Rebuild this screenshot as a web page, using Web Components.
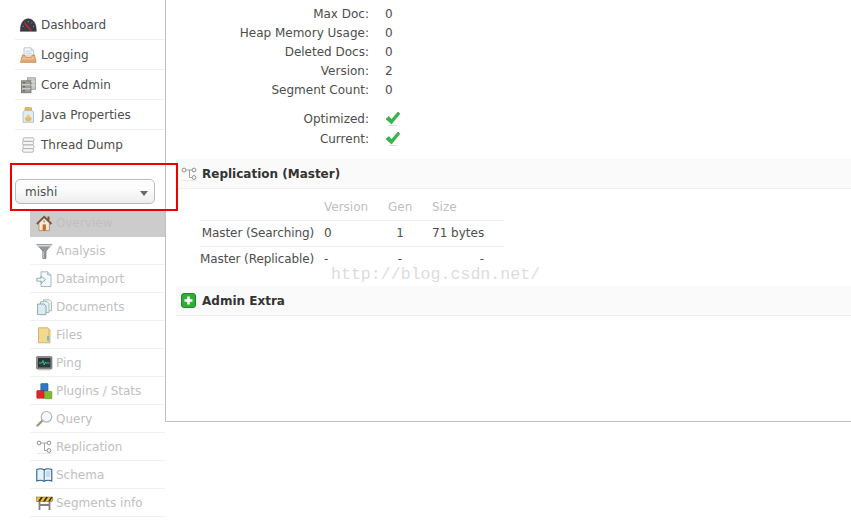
<!DOCTYPE html>
<html lang="en"><head><meta charset="utf-8"><title>Solr Admin</title>
<style>
html,body{margin:0;padding:0;background:#fff;overflow:hidden;height:526px}
body{font-family:"DejaVu Sans",Verdana,sans-serif;font-size:12px;color:#4d4d4d}
</style></head><body>
<solr-app>
  <solr-nav slot="nav">
    <solr-item icon="dashboard">Dashboard</solr-item>
    <solr-item icon="logging">Logging</solr-item>
    <solr-item icon="core">Core Admin</solr-item>
    <solr-item icon="java">Java Properties</solr-item>
    <solr-item icon="thread" last>Thread Dump</solr-item>
    <solr-select>mishi</solr-select>
    <solr-submenu>
      <solr-item sub active icon="home">Overview</solr-item>
      <solr-item sub icon="funnel">Analysis</solr-item>
      <solr-item sub icon="import">Dataimport</solr-item>
      <solr-item sub icon="docs">Documents</solr-item>
      <solr-item sub icon="folder">Files</solr-item>
      <solr-item sub icon="ping">Ping</solr-item>
      <solr-item sub icon="plugins">Plugins / Stats</solr-item>
      <solr-item sub icon="query">Query</solr-item>
      <solr-item sub icon="replication">Replication</solr-item>
      <solr-item sub icon="schema">Schema</solr-item>
      <solr-item sub icon="segments">Segments info</solr-item>
    </solr-submenu>
  </solr-nav>
  <solr-main slot="main">
    <solr-stats>
      <solr-kv label="Max Doc:">0</solr-kv>
      <solr-kv label="Heap Memory Usage:">0</solr-kv>
      <solr-kv label="Deleted Docs:">0</solr-kv>
      <solr-kv label="Version:">2</solr-kv>
      <solr-kv label="Segment Count:">0</solr-kv>
    </solr-stats>
    <solr-flags>
      <solr-kv tall label="Optimized:"><solr-icon name="check"></solr-icon></solr-kv>
      <solr-kv tall label="Current:"><solr-icon name="check"></solr-icon></solr-kv>
    </solr-flags>
    <solr-section icon="replication" heading="Replication (Master)"><solr-repl></solr-repl></solr-section>
    <solr-section icon="plus" heading="Admin Extra"></solr-section>
  </solr-main>
</solr-app>
<script>
const ICONS={
dashboard:`<path d="M0.3 14.3 C0.3 5.5 3.8 1.8 8.3 1.8 C12.8 1.8 16.3 5.5 16.3 14.3 Z" fill="#3a3b44" stroke="#26262b" stroke-width=".5"/><path d="M2.6 9.5 3.6 9.1M4.8 5.6 5.4 6.4M8.3 4v1.2M11.8 5.6 11.2 6.4M14 9.5 13 9.1" stroke="#b8bcc8" stroke-width=".8"/><path d="M5.2 7 11.3 13.6" stroke="#e3242b" stroke-width="1.3"/>`,
logging:`<path d="M4 .8h7l2.7 2.7v8H4z" fill="#f6f8fa" stroke="#a9bcc9" stroke-width=".8"/><path d="M11 .8v2.7h2.7" fill="#dbe5ec" stroke="#a9bcc9" stroke-width=".6"/><path d="M5.5 4.2h5M5.5 6.2h6.5M5.5 8.2h6.5" stroke="#b3c4d0" stroke-width=".7"/><path d="M2.5 8h2l1 2.2h6l1-2.2h2L16 15.3H.6z" fill="#f0bd8c" stroke="#b57a45" stroke-width=".8"/><path d="M1 12.6h14.7v2.3H1z" fill="#e0a46c"/>`,
core:`<rect x="7.5" y=".8" width="8" height="11.5" fill="#c3ccc4" stroke="#8a8f88" stroke-width=".7"/><rect x="1.5" y="3.8" width="9.5" height="12" fill="#9a9e96" stroke="#666" stroke-width=".7"/><path d="M2 7.8h8.5M2 11.8h8.5M11 4.5h4.2M11 8.3h4.2" stroke="#dcdeda" stroke-width="1"/><path d="M3 5.8h2M3 9.8h2M3 13.8h2" stroke="#4e524c" stroke-width="1"/>`,
java:`<rect x="5" y=".6" width="6.5" height="2.6" rx=".6" fill="#e8c058" stroke="#b48f33" stroke-width=".6"/><path d="M4.3 3.6h8l1.2 2v9.7H3V5.6z" fill="#e1edf5" stroke="#a0b6c6" stroke-width=".8"/><ellipse cx="8.3" cy="12" rx="3.3" ry="2.4" fill="#e3bd63"/><circle cx="8.3" cy="9" r="1.6" fill="#eccb7e"/>`,
thread:`<g fill="#f6f6f6" stroke="#a6a6a6" stroke-width=".8"><rect x="3" y=".8" width="11" height="3.6" rx="1.4"/><rect x="2.5" y="4.4" width="11" height="3.6" rx="1.4"/><rect x="3" y="8" width="11" height="3.6" rx="1.4"/><rect x="2.5" y="11.6" width="11" height="3.6" rx="1.4"/></g>`,
home:`<path d="M.5 8.3 8.2.8l7.7 7.5-1.2 1.2L8.2 3.2 1.7 9.5z" fill="#7c4f38" stroke="#5f3a28" stroke-width=".4"/><rect x="11.5" y="1.5" width="2" height="3.5" fill="#7c4f38"/><path d="M3 8 8.2 3.2 13.4 8v7.6H3z" fill="#f7ead6" stroke="#a67a58" stroke-width=".7"/><rect x="6.6" y="9.4" width="3.3" height="6.2" fill="#c4702f"/><circle cx="8.2" cy="6.6" r="1" fill="#7ba2c4"/>`,
funnel:`<path d="M.8 1.5h15L10 8v7.5H6.8V8z" fill="#93979b" stroke="#75787b" stroke-width=".7"/><path d="M1.4 1.8h14v1.7h-14z" fill="#d2d5d7"/><path d="M7.6 8.5v6.5" stroke="#c5c8ca" stroke-width=".9"/>`,
import:`<path d="M5 .8h6.7L15 4v11.5H5z" fill="#f6fafc" stroke="#8eaab6" stroke-width=".8"/><path d="M11.7.8V4H15" fill="#d3e2e8" stroke="#8eaab6" stroke-width=".7"/><path d="M.8 7.2h4.4V5l4.3 3.7-4.3 3.7V10.2H.8z" fill="#f0f6f8" stroke="#7d9aa6" stroke-width=".8"/>`,
docs:`<path d="M7.5.8h6l2 2v9h-8z" fill="#f0f6f7" stroke="#8ba0a8" stroke-width=".7"/><path d="M4.5 2.6h6.5l2 2v9h-8.5z" fill="#e6f1f3" stroke="#8ba0a8" stroke-width=".7"/><path d="M1.5 5h6.5l2 2v8.7h-8.5z" fill="#dcebee" stroke="#7d959e" stroke-width=".8"/>`,
folder:`<path d="M2.5.8h9l2.5 2v13h-11.5z" fill="#f3d88f" stroke="#c9a458" stroke-width=".8"/><path d="M12.5 3v12" stroke="#e7c676" stroke-width="1"/><path d="M12 9v4.8" stroke="#58b7e0" stroke-width="1.6"/>`,
ping:`<rect x=".5" y="1.5" width="15.5" height="12.5" rx="1" fill="#8a8a8a" stroke="#666" stroke-width=".6"/><rect x="2" y="3" width="12.5" height="9.5" fill="#2b3a38"/><path d="M3 8h3l1-2.5 1.3 4.5 1-3 .7 1h3.5" fill="none" stroke="#3fd6a5" stroke-width=".8"/><path d="M2 14.8h12.5" stroke="#bbb" stroke-width="1"/>`,
plugins:`<rect x="4.8" y=".6" width="7.2" height="7.4" rx=".5" fill="#2b78cc" stroke="#1c5596" stroke-width=".6"/><rect x=".8" y="7.6" width="7.4" height="7.6" rx=".5" fill="#e32528" stroke="#a81518" stroke-width=".6"/><rect x="8.5" y="8.4" width="7.3" height="7.3" rx=".5" fill="#7dbd30" stroke="#578a1e" stroke-width=".6"/>`,
query:`<path d="M6.5 9.5 1.5 14.5" stroke="#a79377" stroke-width="2.3" stroke-linecap="round"/><circle cx="10.5" cy="5.8" r="5.3" fill="#f5f8fb" stroke="#aeb5ba" stroke-width="1.2"/>`,
replication:`<g fill="#fff" stroke="#909090" stroke-width="1"><circle cx="3" cy="4" r="1.9"/><circle cx="13" cy="4" r="1.9"/><circle cx="13" cy="11.5" r="1.9"/></g><path d="M5 4h3.5v7.5H11M8.5 4H11" fill="none" stroke="#a2a2a2" stroke-width="1"/><path d="M1 14.5h15" stroke="#e8e8e8" stroke-width="1"/>`,
schema:`<path d="M.8 2.5C3 1.5 6 1.5 8.2 2.8 10.4 1.5 13.4 1.5 15.8 2.5V14C13.4 13 10.4 13 8.2 14.3 6 13 3 13 .8 14Z" fill="#eaf2f8" stroke="#215f9a" stroke-width="1.1"/><path d="M8.2 2.8v11.5" stroke="#215f9a" stroke-width=".9"/><path d="M10 5h4M10 7h4M10 9h4" stroke="#9db5c5" stroke-width=".8"/>`,
segments:`<rect x="0.5" y="2" width="16" height="4.5" fill="#f2c01f" stroke="#7a6318" stroke-width=".5"/><path d="M2 6.5 5 2h2L4 6.5zM7 6.5 10 2h2L9 6.5zM12 6.5 15 2h1.5L14 6.5z" fill="#2a2a2a"/><path d="M3.5 6.5V15M13.5 6.5V15M3.5 10h10" stroke="#808080" stroke-width="1.8" fill="none"/>`,
check:`<path d="M1 8 4 5.5 6.5 8.5 13 1l1.8 1.8L6.5 13Z" fill="#35b84a" stroke="#28983b" stroke-width=".6"/><path d="M4 14.5h8" stroke="#ddd" stroke-width="1"/>`,
plus:`<rect x=".5" y=".5" width="14" height="14" rx="2.5" fill="#2fae35" stroke="#1f8a26"/><path d="M7.5 3.5v8M3.5 7.5h8" stroke="#fff" stroke-width="2.6"/>`
};
const def=(name,css,html,extra={})=>{
  class C extends HTMLElement{
    constructor(){super();const r=this.attachShadow({mode:'open'});r.innerHTML=`<style>${css}</style>`+(typeof html==='function'?html(this):html);}
    connectedCallback(){if(extra.connected)extra.connected.call(this)}
  }
  customElements.define(name,C);
};
def('solr-icon',`:host{display:inline-flex;width:16px;height:16px;flex:none}svg{width:17px;height:16px;overflow:visible}`,'',{connected(){
  const s=document.createElementNS('http://www.w3.org/2000/svg','svg');s.setAttribute('viewBox','0 0 17 16');s.innerHTML=ICONS[this.getAttribute('name')]||'';this.shadowRoot.append(s);
}});
def('solr-app',`:host{display:block;position:relative;width:851px;height:526px;overflow:hidden}
.l{display:flex;align-items:flex-start}
.wm{position:absolute;left:331px;top:265px;font:16.6px/20px "Liberation Mono",monospace;color:#dcdcdc;white-space:nowrap}
.red{position:absolute;left:10px;top:163px;width:164px;height:44px;border:2px solid #ee0000;pointer-events:none}`,
`<div class="l"><slot name="nav"></slot><slot name="main"></slot></div><div class="red"></div><div class="wm">http://blog.csdn.net/</div>`);
def('solr-nav',`:host{display:block;width:150px;flex:none;padding:10px 0 0 15px}`,`<slot></slot>`);
def('solr-submenu',`:host{display:block;margin:5px 0 0 15px}`,`<slot></slot>`);
def('solr-item',`:host{display:flex;align-items:center;box-sizing:border-box;height:30px;padding-left:5px;gap:5px;border-bottom:1px solid #f0f0f0;white-space:nowrap;color:#4d4d4d}
:host([last]){border-bottom:0}
:host([sub]){height:28px;padding:0 0 0 6px;gap:4px;color:#c0c0c0}
:host([active]){background:#ccc;border-bottom-color:#ccc}`,
el=>`<solr-icon name="${el.getAttribute('icon')}"></solr-icon><span><slot></slot></span>`);
def('solr-select',`:host{display:flex;align-items:center;justify-content:space-between;box-sizing:border-box;width:140px;height:25px;margin-top:19px;padding:0 6px 0 9px;border:1px solid #bcbcbc;border-radius:5px;background:linear-gradient(#fcfcfc 40%,#ececec);color:#4d4d4d}
i{width:0;height:0;border:4.5px solid transparent;border-top:5px solid #6a6a6a;border-bottom:0;margin-top:3px}`,`<span><slot></slot></span><i></i>`);
def('solr-main',`:host{display:block;box-sizing:border-box;width:686px;height:422px;flex:none;border-left:1px solid #c0c0c0;border-bottom:1px solid #c0c0c0;padding:4px 0 0 10px}`,`<slot></slot>`);
def('solr-stats',`:host{display:block}`,`<slot></slot>`);
def('solr-flags',`:host{display:block;margin:10px 0 10px}`,`<slot></slot>`);
def('solr-kv',`:host{display:flex;align-items:center;height:19px}
:host([tall]){height:20px}
.k{width:193px;text-align:right;white-space:nowrap}.v{margin-left:16px;display:flex}`,
el=>`<span class="k">${el.getAttribute('label')}</span><span class="v"><slot></slot></span>`);
def('solr-section',`:host{display:block}
h2{display:flex;align-items:center;gap:5px;box-sizing:border-box;height:30px;margin:0;padding-left:5px;background:#fafafa;border-bottom:1px solid #eee;font-size:12px;font-weight:bold;color:#333}`,
el=>`<h2><solr-icon name="${el.getAttribute('icon')}"></solr-icon><span>${el.getAttribute('heading')}</span></h2><slot></slot>`);
def('solr-repl',`:host{display:block;padding:5px 0 14px 24px}
table{border-collapse:collapse;table-layout:fixed;width:304px}
th,td{padding:0;height:26px;box-sizing:border-box;border-bottom:1px solid #f0f0f0;font-weight:normal;white-space:nowrap}
tbody tr:last-child>*{border-bottom:0}
thead th{color:#c0c0c0;text-align:left}
tbody th{text-align:right;padding-right:10px;letter-spacing:-.1px}
.c{text-align:center}.r{text-align:right;padding-right:20px}`,
`<table><colgroup><col style="width:124px"><col style="width:64px"><col style="width:24px"><col style="width:92px"></colgroup>
<thead><tr><th></th><th>Version</th><th>Gen</th><th style="padding-left:20px">Size</th></tr></thead>
<tbody><tr><th>Master (Searching)</th><td>0</td><td class="c">1</td><td style="padding-left:20px">71 bytes</td></tr>
<tr><th>Master (Replicable)</th><td>-</td><td class="c">-</td><td class="r">-</td></tr></tbody></table>`);
</script>
</body></html>
